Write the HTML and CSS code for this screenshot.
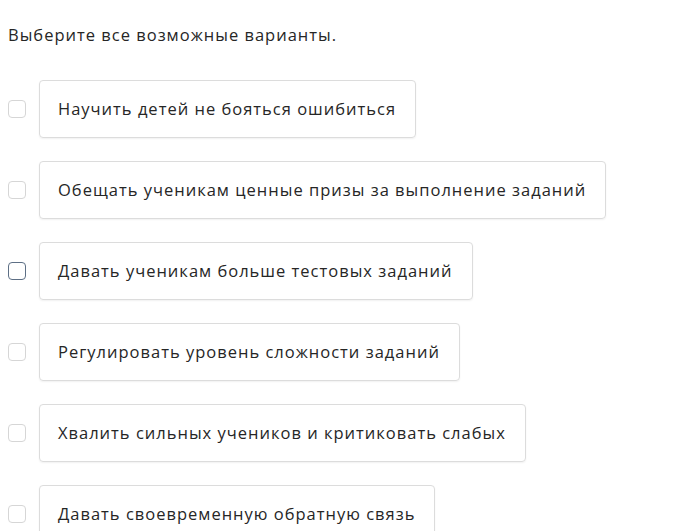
FILE: index.html
```html
<!DOCTYPE html>
<html lang="ru">
<head>
<meta charset="utf-8">
<link rel="stylesheet" href="styles.css">
</head>
<body>
<div class="quiz">
  <p class="prompt">Выберите все возможные варианты.</p>
  <ul class="options">
    <li class="option"><span class="check"></span><span class="label">Научить детей не бояться ошибиться</span></li>
    <li class="option"><span class="check"></span><span class="label">Обещать ученикам ценные призы за выполнение заданий</span></li>
    <li class="option"><span class="check check-hover"></span><span class="label">Давать ученикам больше тестовых заданий</span></li>
    <li class="option"><span class="check"></span><span class="label">Регулировать уровень сложности заданий</span></li>
    <li class="option"><span class="check"></span><span class="label">Хвалить сильных учеников и критиковать слабых</span></li>
    <li class="option"><span class="check"></span><span class="label">Давать своевременную обратную связь</span></li>
  </ul>
</div>
</body>
</html>
```

FILE: styles.css
```css
html, body {
  margin: 0;
  padding: 0;
  background: #ffffff;
}
body {
  font-family: "Open Sans", "Noto Sans", sans-serif;
  color: #262626;
  font-size: 16.5px;
  letter-spacing: 1px;
}
.quiz {
  padding: 24px 8px 0 8px;
}
.prompt {
  margin: 0 0 34px 0;
  line-height: 22px;
}
.options {
  list-style: none;
  margin: 0;
  padding: 0;
  display: flex;
  flex-direction: column;
  gap: 23px;
}
.option {
  display: flex;
  align-items: center;
  gap: 13px;
}
.check {
  width: 16px;
  height: 16px;
  border: 1.5px solid #d6d6d6;
  border-radius: 4px;
  flex: none;
  background: #fff;
}
.check-hover {
  border-color: #5d6f85;
}
.label {
  display: block;
  padding: 17px 19px 17px 18px;
  line-height: 22px;
  border: 1px solid #dcdcdc;
  border-radius: 4px;
  box-shadow: 0 1px 2px rgba(0,0,0,0.06);
  white-space: nowrap;
}
```
